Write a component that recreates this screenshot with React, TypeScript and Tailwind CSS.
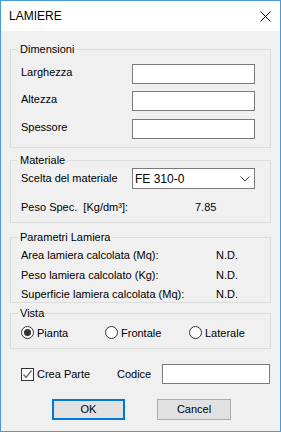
import type { ReactNode } from 'react';

const font = { fontFamily: '"Liberation Sans", Arial, sans-serif' };

function GroupBox({ label, className, children }: { label: string; className: string; children: ReactNode }) {
  return (
    <div className={`relative border border-[#dcdcdc] ${className}`}>
      <span className="absolute -top-[8px] left-[7px] bg-[#f0f0f0] px-[2px] leading-[14px]">{label}</span>
      {children}
    </div>
  );
}

function TextBox({ className }: { className: string }) {
  return <div className={`h-[20px] shrink-0 border border-[#7a7a7a] bg-white ${className}`} />;
}

function Radio({ label, checked }: { label: string; checked?: boolean }) {
  return (
    <div className="flex w-[84px] shrink-0 items-center gap-[3px]">
      <div className="flex h-[13px] w-[13px] items-center justify-center rounded-full border border-[#333] bg-white">
        {checked && <div className="h-[7px] w-[7px] rounded-full bg-[#333]" />}
      </div>
      <span className="leading-[14px]">{label}</span>
    </div>
  );
}

function Row({ label, value, className }: { label: string; value: string; className?: string }) {
  return (
    <div className={`flex h-[14px] items-center leading-[14px] ${className ?? ''}`}>
      <span className="w-[195px] shrink-0">{label}</span>
      <span>{value}</span>
    </div>
  );
}

export default function App() {
  return (
    <div
      className="flex h-[432px] w-[281px] flex-col border border-[#4a9ad6] bg-[#f0f0f0] text-[11px] text-black"
      style={font}
    >
      {/* Title bar */}
      <div className="flex h-[30px] items-center justify-between bg-white pl-[8px] pr-[8px]">
        <span className="text-[12px]">LAMIERE</span>
        <svg width="11" height="11" viewBox="0 0 11 11" className="mr-[1px]">
          <path d="M0.5 0.5 L10.5 10.5 M10.5 0.5 L0.5 10.5" stroke="#000" strokeWidth="1" />
        </svg>
      </div>

      <div className="flex flex-col px-[9px]">
        <GroupBox label="Dimensioni" className="mt-[18px] px-[10px] pt-[14px] pb-[8px]">
          <div className="flex items-center">
            <span className="mb-[3px] w-[111px] shrink-0">Larghezza</span>
            <TextBox className="w-[123px]" />
          </div>
          <div className="mt-[7px] flex items-center">
            <span className="mb-[3px] w-[111px] shrink-0">Altezza</span>
            <TextBox className="w-[123px]" />
          </div>
          <div className="mt-[8px] flex items-center">
            <span className="mb-[3px] w-[111px] shrink-0">Spessore</span>
            <TextBox className="w-[123px]" />
          </div>
        </GroupBox>

        <GroupBox label="Materiale" className="mt-[12px] px-[10px] pt-[7px] pb-[8px]">
          <div className="flex items-center">
            <span className="w-[111px] shrink-0">Scelta del materiale</span>
            <div className="flex h-[21px] w-[123px] shrink-0 items-center justify-between border border-[#7a7a7a] bg-white pl-[2px] pr-[4px]">
              <span className="text-[12px]">FE 310-0</span>
              <svg width="10" height="6" viewBox="0 0 10 6">
                <path d="M0.5 0.5 L5 5 L9.5 0.5" fill="none" stroke="#444" strokeWidth="1" />
              </svg>
            </div>
          </div>
          <div className="mt-[11px] flex h-[14px] items-center leading-[14px]">
            <span className="w-[174px] shrink-0">Peso Spec.&nbsp; [Kg/dm³]:</span>
            <span>7.85</span>
          </div>
        </GroupBox>

        <GroupBox label="Parametri Lamiera" className="mt-[14px] px-[10px] pt-[10px] pb-[1px]">
          <Row label="Area lamiera calcolata (Mq):" value="N.D." />
          <Row label="Peso lamiera calcolato (Kg):" value="N.D." className="mt-[6px]" />
          <Row label="Superficie lamiera calcolata (Mq):" value="N.D." className="mt-[5px]" />
        </GroupBox>

        <GroupBox label="Vista" className="mt-[10px] px-[10px] pt-[12px] pb-[9px]">
          <div className="flex h-[13px] items-center">
            <Radio label="Pianta" checked />
            <Radio label="Frontale" />
            <Radio label="Laterale" />
          </div>
        </GroupBox>

        <div className="mt-[15px] flex items-center pl-[11px]">
          <div className="flex w-[96px] shrink-0 items-center gap-[3px]">
            <div className="flex h-[13px] w-[13px] items-center justify-center border border-[#333] bg-white">
              <svg width="11" height="11" viewBox="0 0 11 11">
                <path d="M1.5 5.5 L4 8.5 L9.5 1.5" fill="none" stroke="#6d6d6d" strokeWidth="1.4" />
              </svg>
            </div>
            <span className="leading-[14px]">Crea Parte</span>
          </div>
          <span className="w-[45px] shrink-0 leading-[14px]">Codice</span>
          <TextBox className="w-[108px]" />
        </div>

        <div className="mt-[15px] flex gap-[32px] pl-[42px]">
          <button className="h-[21px] w-[73px] border-2 border-[#0078d7] bg-[#e1e1e1] text-[11px] leading-none">
            OK
          </button>
          <button className="h-[21px] w-[74px] border border-[#adadad] bg-[#e1e1e1] text-[11px] leading-none">
            Cancel
          </button>
        </div>
      </div>
    </div>
  );
}
